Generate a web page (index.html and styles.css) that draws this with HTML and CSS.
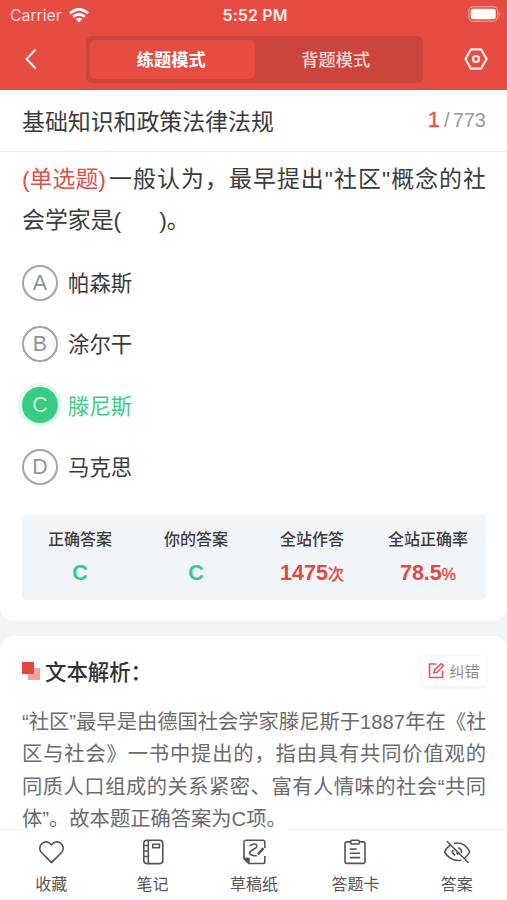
FILE: index.html
```html
<!DOCTYPE html>
<html lang="zh-CN">
<head>
<meta charset="utf-8">
<title>练题模式</title>
<link rel="stylesheet" href="styles.css">
</head>
<body>
<div class="app">
  <header class="header">
    <div class="status">
      <div class="carrier"><span>Carrier</span>
        <svg width="20" height="15" viewBox="0 0 20 15" fill="none" stroke="#fff" stroke-width="2.7"><path d="M1 5.2Q10-2.6 19 5.2M4.2 8.7Q10 3.8 15.8 8.7"/><path d="M6.8 11.1Q10 8.6 13.2 11.1L10 14.5z" fill="#fff" stroke="none"/></svg>
      </div>
      <div class="time">5:52 PM</div>
      <svg class="battery" width="33" height="16" viewBox="0 0 33 16"><rect x=".8" y=".8" width="28.8" height="14.4" rx="4.3" fill="none" stroke="#f3aaa5" stroke-width="1.1"/><rect x="2.7" y="2.7" width="25" height="10.6" rx="2.5" fill="#fff"/><path d="M31 5.5q2 2.5 0 5z" fill="#f3aaa5"/></svg>
    </div>
    <nav class="nav">
      <svg class="back" width="12" height="22" viewBox="0 0 12 22" fill="none" stroke="#fff" stroke-width="1.8"><path d="M10.7 1.5L1.5 11l9.2 9.5"/></svg>
      <div class="tabs"><div class="tab active">练题模式</div><div class="tab">背题模式</div></div>
      <svg class="gear" width="24" height="22" viewBox="0 0 24 22" fill="none" stroke="#fdecea" stroke-width="2.2" stroke-linejoin="round"><path d="M7 1.3h10L22.6 11 17 20.7H7L1.4 11z"/><circle cx="12" cy="11" r="3"/></svg>
    </nav>
  </header>
  <main>
    <section class="card question-card">
      <div class="title-row"><h1>基础知识和政策法律法规</h1><div class="count"><b>1</b><i>/</i>773</div></div>
      <div class="question">
        <div class="line full"><span class="kind">(单选题)</span>一般认为，最早提出"社区"概念的社</div>
        <div class="line">会学家是(<span class="blank"></span>)。</div>
      </div>
      <div class="options">
        <div class="option"><span class="mark">A</span><span>帕森斯</span></div>
        <div class="option"><span class="mark">B</span><span>涂尔干</span></div>
        <div class="option right"><span class="mark">C</span><span>滕尼斯</span></div>
        <div class="option"><span class="mark">D</span><span>马克思</span></div>
      </div>
      <div class="stats">
        <div class="stat"><span>正确答案</span><strong class="green">C</strong></div>
        <div class="stat"><span>你的答案</span><strong class="green">C</strong></div>
        <div class="stat"><span>全站作答</span><strong>1475<small>次</small></strong></div>
        <div class="stat"><span>全站正确率</span><strong>78.5<small>%</small></strong></div>
      </div>
    </section>
    <section class="card analysis">
      <div class="analysis-head">
        <svg width="18" height="18" viewBox="0 0 18 18"><path d="M6 6h12v12H6z" fill="#f5a19b"/><path d="M0 0h12v12H0z" fill="#e2473e"/></svg>
        <h2>文本解析：</h2>
        <div class="report">
          <svg width="17" height="17" viewBox="0 0 17 17" fill="none" stroke="#df5853" stroke-width="1.6"><path d="M8.5 2H1.5v13.5h13V8.5"/><path d="M6 11l.6-3.2 6.7-6.2 2.2 2.2-6.5 6.5z" stroke-linejoin="round"/></svg>
          <span>纠错</span>
        </div>
      </div>
      <div class="text">
        <div class="line full">“社区”最早是由德国社会学家滕尼斯于1887年在《社</div>
        <div class="line full">区与社会》一书中提出的，指由具有共同价值观的</div>
        <div class="line full">同质人口组成的关系紧密、富有人情味的社会“共同</div>
        <div class="line"><span class="last">体”。故本题正确答案为C项。</span></div>
      </div>
    </section>
  </main>
  <footer class="toolbar">
    <div class="tool"><svg width="26" height="26" viewBox="0 0 26 26"><path d="M13.500 23.600L3.200 13.200C-1.700 7.200 7.300-1.700 13.500 5.700c6.200-7.400 15.200 1.500 10.300 7.500z"/></svg>收藏</div>
    <div class="tool"><svg width="26" height="26" viewBox="0 0 26 26"><rect x="3.800" y="1.200" width="19" height="23.400" rx="3"/><path d="M8.300 1.200v23.400M3.800 6.500h4.500M3.800 12h4.500M3.800 17.500h4.500M12.800 5.300h6.600v3.400h-6.600z"/></svg>笔记</div>
    <div class="tool"><svg width="26" height="26" viewBox="0 0 26 26"><path d="M23.800 9V3.200q0-1.900-1.900-1.900H5Q3 1.300 3 3.200v16.300l4.800 5H22q1.800 0 1.800-1.800V17"/><path d="M3 19.300l5 .2-.2 5z" fill="#555"/><path d="M8.500 6.800Q14 3.800 15.500 6T12 10.800Q7.500 13.200 9 15t7 1.800"/><path d="M16.800 15.500l5.700-6.300" stroke-width="2.500"/></svg>草稿纸</div>
    <div class="tool"><svg width="26" height="26" viewBox="0 0 26 26"><path d="M8 2.900H5Q3 2.900 3 4.900v17.500q0 2 2 2h16q2 0 2-2V4.900q0-2-2-2h-3"/><rect x="8.800" y="1.200" width="8.400" height="3.800" rx=".8"/><path d="M7.800 10h7M7.800 14.300h10.400M7.800 18.600h10.400"/></svg>答题卡</div>
    <div class="tool"><svg width="28" height="26" viewBox="0 0 28 26"><path d="M7.500 6Q3.300 8.800 1.500 13 7.600 22.900 18.500 21.300M11 4.400Q21.500 2.300 26.700 13q-1.800 3.600-4.900 5.800M10 10.800q-1.500 3.600 2.200 5.700M15.200 8.800q4 1.300 3 5.200M4 2.200l21.500 21.600M13.500 13.500q.5 1.500 2 1.600"/></svg>答案</div>
  </footer>
</div>
</body>
</html>
```
FILE: styles.css
```css
* { box-sizing: border-box; }
body { margin: 0; font-family: "Liberation Sans", "Noto Sans CJK SC", sans-serif; color: #3b3b3b; }
.app { width: 507px; height: 900px; display: flex; flex-direction: column; background: #f1f5f8; }
.header { height: 90px; flex: none; background: #e74c43; color: #fff; }
.status { height: 30px; padding: 0 7px 0 10px; display: grid; grid-template-columns: 1fr auto 1fr; align-items: center; font-size: 17px; }
.carrier { display: flex; align-items: center; gap: 7px; font-family: Inter, sans-serif; font-size: 15.8px; color: #fbdcda; }
.time { font-family: Inter, sans-serif; font-size: 16px; font-weight: 600; letter-spacing: .1px; color: #fdebea; }
.battery { justify-self: end; margin: -2px -1px 0 0; }
.nav { height: 58px; display: flex; align-items: center; padding: 0 19px 0 25px; }
.tabs { margin-left: 49px; width: 337px; height: 47px; padding: 4px; display: flex; background: #cb453c; border-radius: 6px; }
.tab { flex: 1; display: flex; align-items: center; justify-content: center; padding: 0 2px 2px 0; font-size: 17.2px; font-weight: 500; color: #fbd9d6; border-radius: 5px; }
.tab.active { background: #e74c43; color: #fff; font-weight: 700; }
.gear { margin-left: auto; }
main { flex: 1; min-height: 0; display: flex; flex-direction: column; position: relative; z-index: 1; }
.card { background: #fff; }
.question-card { height: 531px; flex: none; border-radius: 0 0 14px 14px; }
.title-row { height: 62px; border-bottom: 1px solid #ececec; padding: 0 21px 1px 22px; display: flex; justify-content: space-between; align-items: center; }
h1 { margin: 0; font-size: 22.9px; font-weight: 400; }
.count { font-size: 20px; color: #999; }
.count b { color: #dc5650; font-weight: 400; font-size: 22px; -webkit-text-stroke: .4px #dc5650; }
.count i { font-style: normal; margin: 0 3px 0 4px; }
.question { padding: 7px 21px 0 22px; font-size: 22.9px; line-height: 40.5px; }
.line { white-space: nowrap; }
.line.full { text-align-last: justify; text-justify: inter-character; }
.kind { display: inline-block; width: 86px; text-align-last: left; color: #df504a; }
.blank { display: inline-block; width: 38px; }
.options { padding: 12px 0 0 22px; }
.option { height: 61.3px; display: flex; align-items: center; gap: 10px; font-size: 21.4px; }
.option span:last-child { padding-bottom: 2px; }
.mark { width: 36px; height: 36px; border: 2px solid #a3a5ad; border-radius: 50%; display: flex; align-items: center; justify-content: center; padding-top: 1px; color: #90939d; }
.right { color: #40cb88; }
.right .mark { border: 0; background: #37cc81; color: #c8f8dd; box-shadow: 0 0 0 4px #e1fced; }
.stats { margin: 17px 21px 0 22px; height: 86px; padding-top: 13px; background: #f1f5f8; border-radius: 5px; display: grid; grid-template-columns: repeat(4, 1fr); }
.stat { text-align: center; font-size: 16px; line-height: 26px; font-weight: 500; }
.stat span { display: block; }
.stat strong { display: block; margin-top: 7px; font-size: 21.5px; color: #df4b43; }
.stat small { font-size: 16px; font-weight: 400; -webkit-text-stroke: .4px #df4b43; }
.stat .green { color: #3ac984; }
.analysis { margin-top: 15px; flex: 1; min-height: 0; border-radius: 14px 14px 0 0; padding: 0 21px 0 22px; }
.analysis-head { height: 70px; display: flex; align-items: center; }
h2 { margin: -2px 0 0 5px; font-size: 21.4px; font-weight: 500; color: #333; }
.report { margin-left: auto; width: 64px; height: 30px; display: flex; align-items: center; justify-content: center; gap: 4px; font-size: 15px; color: #8b8b8b; border-radius: 4px; box-shadow: 0 1px 4px #eee; }
.report svg { margin-top: -2px; }
.report span { padding-bottom: 2px; }
.text { font-size: 20.3px; line-height: 32.3px; color: #6b6b6b; }
.last { background: #fff; }
.toolbar { height: 71px; flex: none; background: #fff; border-top: 1px solid #f0f0f0; border-bottom: 1px solid #eee; display: grid; grid-template-columns: repeat(5, 1fr); }
.tool { display: flex; flex-direction: column; align-items: center; padding: 9px 0 0 1px; gap: 9px; font-size: 16px; line-height: 22px; color: #555; }
.tool svg { fill: none; stroke: #555; stroke-width: 1.6; stroke-linejoin: round; flex: none; }
```
